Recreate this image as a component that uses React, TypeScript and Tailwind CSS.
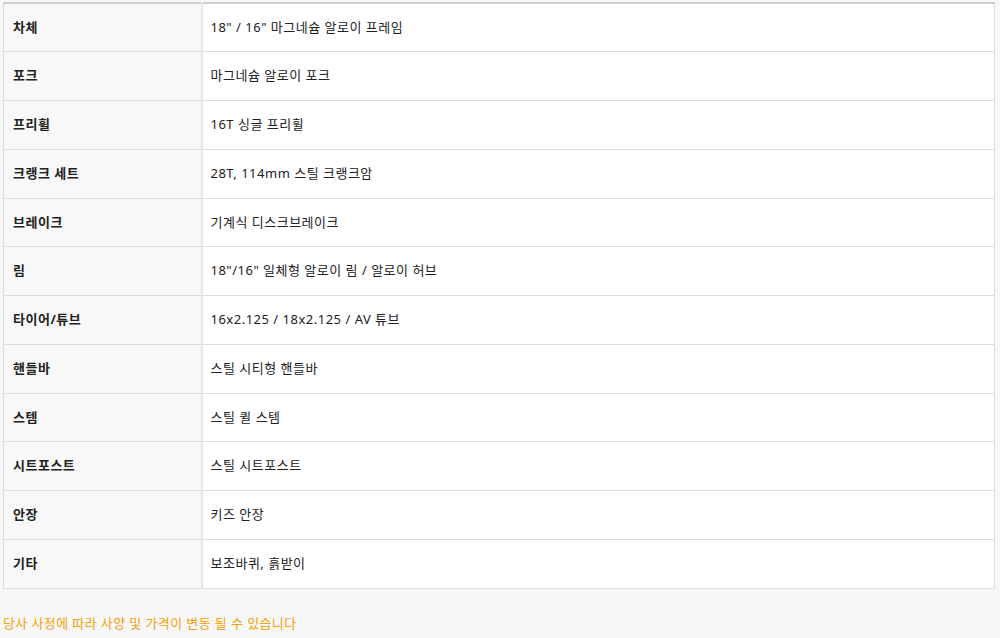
import React from "react";

const rows: [string, string][] = [
  ["차체", "18\" / 16\" 마그네슘 알로이 프레임"],
  ["포크", "마그네슘 알로이 포크"],
  ["프리휠", "16T 싱글 프리휠"],
  ["크랭크 세트", "28T, 114mm 스틸 크랭크암"],
  ["브레이크", "기계식 디스크브레이크"],
  ["림", "18\"/16\" 일체형 알로이 림 / 알로이 허브"],
  ["타이어/튜브", "16x2.125 / 18x2.125 / AV 튜브"],
  ["핸들바", "스틸 시티형 핸들바"],
  ["스템", "스틸 퀼 스템"],
  ["시트포스트", "스틸 시트포스트"],
  ["안장", "키즈 안장"],
  ["기타", "보조바퀴, 흙받이"],
];

export default function App() {
  return (
    <div
      className="w-[1000px] h-[638px] bg-[#f7f7f7] pl-[3px] pt-[2px] text-[13px] text-[#222] tracking-[0.5px]"
      style={{ fontFamily: '"Noto Sans", "Noto Sans CJK KR", sans-serif' }}
    >
      <table className="w-[992px] border-collapse border border-[#dcdcdc] border-t-2 border-t-[#d0d0d0]">
        <tbody>
          {rows.map(([k, v]) => (
            <tr key={k} className="h-[48.75px]">
              <th className="w-[198px] bg-[#f8f8f8] border-b border-[#dedede] border-r-2 border-r-[#e6e6e6] pl-[9px] text-left font-bold align-middle">
                {k}
              </th>
              <td className="bg-white border-b border-[#dedede] pl-[8px] align-middle">{v}</td>
            </tr>
          ))}
        </tbody>
      </table>
      <p className="mt-[25px] text-[#f5a20a] tracking-[0.4px]">당사 사정에 따라 사양 및 가격이 변동 될 수 있습니다</p>
    </div>
  );
}
